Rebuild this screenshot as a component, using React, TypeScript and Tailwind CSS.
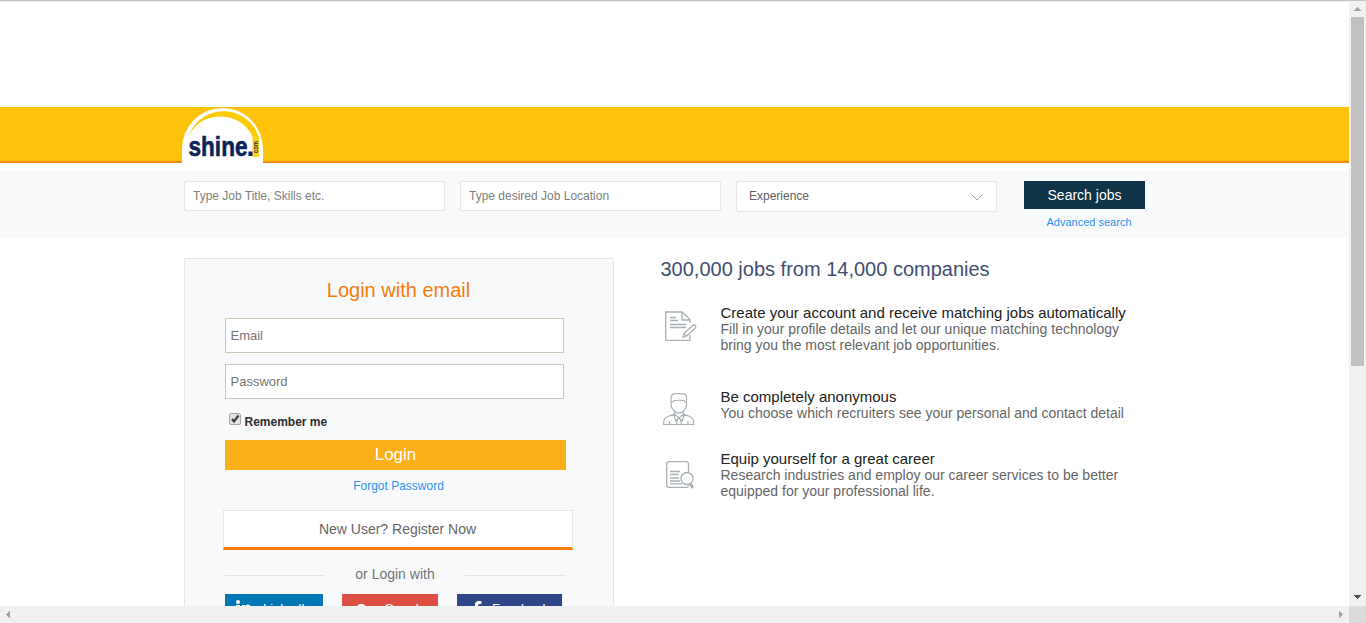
import React from "react";

function Logo() {
  return (
    <svg width="82" height="57" viewBox="0 0 82 57" className="block" aria-label="shine.com">
      <path d="M0 57V42A40.500 41 0 0 1 81 42V57Z" fill="#fff" />
      <path d="M6 33A36 34 0 0 1 76.500 30H70A33 29 0 0 0 6 33Z" fill="#ffcb05" />
      <path d="M8 35A32.500 29.500 0 0 1 70.500 30V34H8Z" fill="#fff" />
      <rect x="70.500" y="29" width="6.500" height="21" fill="#ffd21c" />
      <text x="6.500" y="48.500" fontFamily="Liberation Sans, sans-serif" fontWeight="700" fontSize="27.500" textLength="59" lengthAdjust="spacingAndGlyphs" fill="#0c2359" stroke="#0c2359" strokeWidth=".6">shine</text>
      <rect x="66.500" y="44.500" width="4" height="4.500" fill="#0c2359" />
      <text transform="translate(75.500 46) rotate(-90)" fontFamily="Liberation Sans, sans-serif" fontWeight="700" fontSize="6.500" textLength="12" lengthAdjust="spacingAndGlyphs" fill="#10285c">com</text>
    </svg>
  );
}

function ProfileIcon() {
  return (
    <svg width="32" height="31" viewBox="0 0 32 31" fill="none" stroke="#a9b1b4" strokeWidth="1.300" className="block">
      <path d="M25 12V8.500L17 1H.7V29.300H25V24M17 1V9H25" />
      <path d="M5 6.500H11M5 9.500H13M5 13.500H21M5 16.500H21" />
      <path d="M18 26.500L19.200 22L28 14.400Q29.500 13.500 30.500 14.800Q31.200 16 30.200 17L21.500 25.300ZM19.200 22L21.500 25.300" />
    </svg>
  );
}

function PersonIcon() {
  return (
    <svg width="32" height="33" viewBox="0 0 32 33" fill="none" stroke="#a9b1b4" strokeWidth="1.200" className="block">
      <path d="M8 12V5Q8 .7 13 .7H19Q23.500 .7 23.500 5V12Q23.500 15 20.500 18Q16 22.500 11.500 18Q8 15 8 12ZM8 9.500Q10 9.500 11 7.500Q16 7 21 7.500Q22 9.500 23.500 9.500" />
      <path d="M11.500 18.500V21L5 23.500Q.7 25 .7 29V31.500H30.700V29Q30.700 25 27 23.500L20.500 21V18.500M11.500 21L16 25L20.500 21M11 21.500L12.500 28L16 25L19.500 28L21 21.500M14.500 26.500L13.500 31.500M17.500 26.500L18.500 31.500M6.500 28V31.500M25 28V31.500" />
    </svg>
  );
}

function CareerIcon() {
  return (
    <svg width="30" height="30" viewBox="0 0 30 30" fill="none" stroke="#a9b1b4" strokeWidth="1.300" className="block">
      <path d="M22.500 11V3Q22.500 .7 20.500 .7H3Q.7 .7 .7 3V24Q.7 26.300 3 26.300H21Q22.500 26.300 22.500 24.500" />
      <path d="M4 10.500H14M4 13.500H12.500M4 17H13M4 20H14M4 22.800H16" />
      <circle cx="21" cy="17.500" r="6" />
      <path d="M24 22.300L26.800 27" strokeWidth="2.800" />
    </svg>
  );
}

function Field({ text }: { text: string }) {
  return (
    <div className="flex h-[30px] w-[261px] items-center rounded-[2px] border border-[#e5e5e5] bg-white px-2 text-[12px] text-[#808080]">{text}</div>
  );
}

function SearchBar() {
  return (
    <div className="flex h-[67px] items-start bg-[#f8f9fb] pt-[10px] pl-[184px]">
      <Field text="Type Job Title, Skills etc." />
      <div className="ml-[15px]"><Field text="Type desired Job Location" /></div>
      <div className="ml-[15px] flex h-[31px] w-[261px] items-center justify-between rounded-[2px] border border-[#e5e5e5] bg-white pr-[13px] pl-3 text-[12px] text-[#606266]">
        <span className="-mt-px">Experience</span>
        <svg width="12" height="7" viewBox="0 0 12 7" fill="none" stroke="#929292" strokeWidth=".9" className="mt-[2px]"><path d="M.5 .5L6 6L11.500 .5" /></svg>
      </div>
      <div className="ml-[27px] w-[121px]">
        <div className="flex h-7 items-center justify-center bg-[#0f3347] text-[14px] text-white">Search jobs</div>
        <div className="mt-[5px] pl-[9px] text-center text-[11px] leading-4 text-[#2b92f0]">Advanced search</div>
      </div>
    </div>
  );
}

function LoginCard() {
  return (
    <section className="h-[400px] w-[430px] shrink-0 border border-[#e5e5e5] bg-[#f8f9fb] px-10 pt-[19px]">
      <h2 className="-ml-px text-center text-[20px] leading-6 text-[#f57c0a]">Login with email</h2>
      <div className="mt-4 flex h-[35px] w-[339px] items-center border border-[#cbc8ba] bg-white px-[4.500px] text-[13px] text-[#757575]">Email</div>
      <div className="mt-[11px] flex h-[35px] w-[339px] items-center border border-[#cbc8ba] bg-white px-[4.500px] text-[13px] text-[#757575]">Password</div>
      <div className="mt-[14px] flex h-[14px] pl-1">
        <svg width="12" height="12" viewBox="0 0 12 12" className="block"><rect x=".5" y=".5" width="11" height="11" rx="1.500" fill="#e3e3e3" stroke="#a5a5a5" /><path d="M3 6L5 8.500L9.500 2.500" fill="none" stroke="#3c3c3c" strokeWidth="2.200" /></svg>
        <span className="mt-[1px] ml-[3.500px] text-[12px] leading-4 font-bold text-[#2d2d2d]">Remember me</span>
      </div>
      <div className="mt-[13px] flex h-[30px] w-[341px] items-center justify-center bg-[#fbb01a] text-[17px] text-white">Login</div>
      <div className="mt-2 w-[347px] text-center text-[12px] leading-4 text-[#2b92f0]">Forgot Password</div>
      <div className="mt-4 -ml-0.5 flex h-10 w-[350px] items-center justify-center border border-b-[3px] border-[#e5e5e5] border-b-[#f57c00] bg-white pr-px text-[14px] text-[#666]">New User? Register Now</div>
      <div className="mt-4 flex h-4 w-[341px] items-center text-[14px] leading-4 text-[#757575]">
        <div className="mt-[3px] h-px w-[100px] bg-[#e5e5e5]" />
        <span className="flex-1 text-center">or Login with</span>
        <div className="mt-[3px] h-px w-[101px] bg-[#e5e5e5]" />
      </div>
      <div className="mt-3 flex text-[13px] leading-[30px] text-white">
        <div className="flex h-[30px] w-[98px] bg-[#0077b5] pl-[10px]">
          <svg width="16" height="16" viewBox="0 0 16 16" fill="#fff" className="mt-[6px]"><circle cx="3" cy="2" r="2" /><path d="M1 5H5V15H1ZM7 5H10V6Q11 4.500 13 4.500Q16 4.500 16 9V15H12V9Q12 7.500 11 8V15H7Z" /></svg>
          <span className="ml-3">LinkedIn</span>
        </div>
        <div className="ml-[19px] flex h-[30px] w-24 bg-[#dd4f43] pl-[13px]">
          <svg width="13" height="14" viewBox="0 0 13 14" fill="none" stroke="#fff" strokeWidth="2.500" className="mt-[9px]"><path d="M10 4Q6 0 3 4Q0 8 4 11Q9 13 11 8H6" /></svg>
          <span className="ml-4">Google</span>
        </div>
        <div className="ml-[19px] flex h-[30px] w-[105px] bg-[#2e4587] pl-4">
          <svg width="9" height="16" viewBox="0 0 9 16" fill="#fff" className="mt-[7px]"><path d="M2 16V8H0V5H2V4Q2 0 6 0H8.500V3H7Q5 3 5 5H8V8H5V16Z" /></svg>
          <span className="ml-[10px]">Facebook</span>
        </div>
      </div>
    </section>
  );
}

type BenefitProps = { icon: React.ReactNode; title: string; children: React.ReactNode };

function Benefit({ icon, title, children }: BenefitProps) {
  return (
    <div className="flex whitespace-nowrap">
      <div className="w-[60px] shrink-0">{icon}</div>
      <div>
        <h3 className="text-[15px] leading-4 text-[#222]">{title}</h3>
        <p className="text-[14px] leading-4 text-[#666]">{children}</p>
      </div>
    </div>
  );
}

function Benefits() {
  return (
    <section className="ml-[46.500px]">
      <h1 className="text-[20px] leading-[22px] text-[#434e70]">300,000 jobs from 14,000 companies</h1>
      <div className="mt-[25px] h-[84px]">
        <Benefit icon={<div className="pt-[6px] pl-[4.500px]"><ProfileIcon /></div>} title="Create your account and receive matching jobs automatically">
          Fill in your profile details and let our unique matching technology<br />bring you the most relevant job opportunities.
        </Benefit>
      </div>
      <div className="h-[62px]">
        <Benefit icon={<div className="pt-1 pl-[2.500px]"><PersonIcon /></div>} title="Be completely anonymous">
          You choose which recruiters see your personal and contact detail
        </Benefit>
      </div>
      <Benefit icon={<div className="pt-[10px] pl-[5.500px]"><CareerIcon /></div>} title="Equip yourself for a great career">
        Research industries and employ our career services to be better<br />equipped for your professional life.
      </Benefit>
    </section>
  );
}

export default function App() {
  return (
    <div className="flex h-[623px] w-[1366px] flex-col overflow-hidden bg-white font-['Liberation_Sans',Arial,sans-serif]">
      <div className="flex h-[606px]">
        <main className="h-[606px] w-[1349px] overflow-hidden">
          <div className="h-[107px] border-t border-[#c5c5c5] bg-white"><div className="h-px bg-[#ededed]" /></div>
          <header className="h-[56px] border-b-2 border-[#f78800] bg-[#ffc20a] pl-[182px]"><Logo /></header>
          <div className="h-2" />
          <SearchBar />
          <div className="flex pt-5 pl-[184px]">
            <LoginCard />
            <Benefits />
          </div>
        </main>
        <div className="flex w-[17px] flex-col items-center border-t border-[#c5c5c5] bg-[#f1f1f1]">
          <svg width="7" height="4" viewBox="0 0 7 4" className="mt-[6px] shrink-0" shapeRendering="crispEdges"><path d="M0 4L3.500 0L7 4Z" fill="#a3a3a3" /></svg>
          <div className="mt-[6px] h-[349px] w-[13px] shrink-0 bg-[#c1c1c1]" />
          <svg width="7" height="4" viewBox="0 0 7 4" className="mt-auto mb-[7px] shrink-0" shapeRendering="crispEdges"><path d="M0 0H7L3.500 4Z" fill="#505050" /></svg>
        </div>
      </div>
      <div className="flex h-[17px] items-center bg-[#f1f1f1]">
        <svg width="4" height="7" viewBox="0 0 4 7" className="ml-[6px]" shapeRendering="crispEdges"><path d="M4 0V7L0 3.500Z" fill="#a3a3a3" /></svg>
        <svg width="4" height="7" viewBox="0 0 4 7" className="mr-[6px] ml-auto" shapeRendering="crispEdges"><path d="M0 0V7L4 3.500Z" fill="#a3a3a3" /></svg>
        <div className="h-[17px] w-[17px] bg-[#dcdcdc]" />
      </div>
    </div>
  );
}
